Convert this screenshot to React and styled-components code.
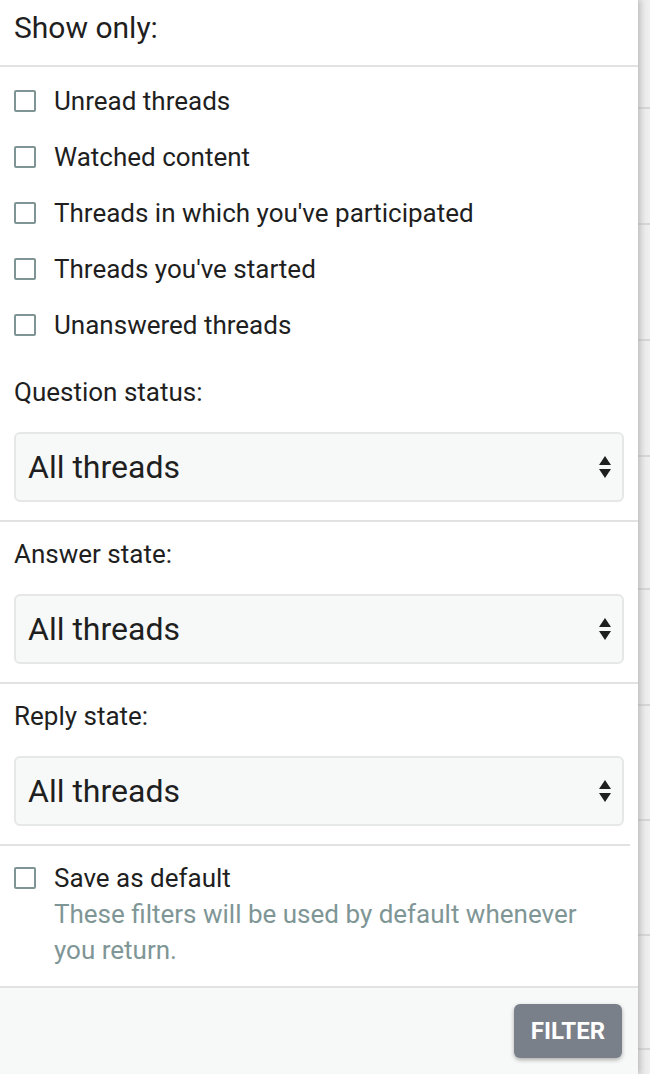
import React from 'react';
import styled, { createGlobalStyle } from 'styled-components';

const GlobalStyle = createGlobalStyle`
  html, body {
    margin: 0;
    padding: 0;
    background: #efefef;
    font-family: Roboto, "Liberation Sans", Arial, sans-serif;
    color: #1f1f1f;
  }
`;

const Page = styled.div`
  display: flex;
  width: 650px;
  height: 1074px;
  overflow: hidden;
`;

const Panel = styled.div`
  width: 638px;
  flex-shrink: 0;
  background: #fff;
  box-shadow: 2px 0 6px rgba(0, 0, 0, 0.18);
  position: relative;
  z-index: 1;
  display: flex;
  flex-direction: column;
`;

const Backdrop = styled.div`
  flex: 1;
  display: flex;
  flex-direction: column;
  background: linear-gradient(90deg, #e4e4e4 0%, #f0f0f0 100%);
`;

const BackdropRow = styled.div`
  flex-shrink: 0;
  border-bottom: 2px solid #d6d6d6;
  box-sizing: border-box;
`;

const Header = styled.div`
  height: 67px;
  box-sizing: border-box;
  padding: 11px 14px 0;
  font-size: 30px;
  line-height: 34px;
  border-bottom: 2px solid #e2e2e2;
`;

const Options = styled.div`
  padding: 6px 0 7px;
`;

const CheckRow = styled.label`
  display: flex;
  align-items: center;
  gap: 18px;
  height: 56px;
  padding: 0 14px;
  font-size: 26px;
`;

const Box = styled.span`
  width: 22px;
  height: 22px;
  box-sizing: border-box;
  border: 2px solid #7f9595;
  border-radius: 2px;
  flex-shrink: 0;
`;

const Section = styled.div`
  padding: 18px 14px;
  border-bottom: ${p => (p.$divider ? '2px solid #e2e2e2' : 'none')};
`;

const FieldLabel = styled.div`
  font-size: 26px;
  line-height: 28px;
  margin-bottom: 26px;
`;

const Select = styled.div`
  height: 70px;
  box-sizing: border-box;
  background: #f7f8f8;
  border: 2px solid #e6e7e7;
  border-radius: 6px;
  display: flex;
  align-items: center;
  justify-content: space-between;
  padding: 0 10px 0 12px;
  font-size: 32px;
`;

const SaveBlock = styled.div`
  margin-right: 8px;
  padding: 14px 6px 18px 14px;
  border-top: 2px solid #e2e2e2;
`;

const SaveRow = styled.div`
  display: flex;
  gap: 18px;
  font-size: 26px;
  line-height: 36px;
  & > span:first-child {
    margin-top: 7px;
  }
`;

const Help = styled.div`
  color: #7f9696;
`;

const Footer = styled.div`
  flex: 1;
  border-top: 2px solid #e2e2e2;
  background: #f7f8f8;
  display: flex;
  justify-content: flex-end;
  align-items: flex-start;
  padding: 16px 16px 0;
`;

const Button = styled.button`
  height: 54px;
  width: 108px;
  border: none;
  border-radius: 6px;
  background: #7a808a;
  color: #fff;
  font-family: Roboto, "Liberation Sans", Arial, sans-serif;
  font-weight: 700;
  font-size: 24px;
  text-transform: uppercase;
  box-shadow: 0 2px 4px rgba(0, 0, 0, 0.3);
`;

const SortIcon = () => (
  <svg width="14" height="24" viewBox="0 0 14 24">
    <path d="M7 1 L13 10 L1 10 Z" fill="#1f1f1f" />
    <path d="M1 14 L13 14 L7 23 Z" fill="#1f1f1f" />
  </svg>
);

const options = [
  'Unread threads',
  'Watched content',
  "Threads in which you've participated",
  "Threads you've started",
  'Unanswered threads',
];

const fields = ['Question status:', 'Answer state:', 'Reply state:'];

const backdropRows = [109, 116, 116, 116, 133, 116, 115, 115, 114];

export default function App() {
  return (
    <>
      <GlobalStyle />
      <Page>
        <Panel>
          <Header>Show only:</Header>
          <Options>
            {options.map(o => (
              <CheckRow key={o}>
                <Box />
                {o}
              </CheckRow>
            ))}
          </Options>
          {fields.map((f, i) => (
            <Section key={f} $divider={i < fields.length - 1}>
              <FieldLabel>{f}</FieldLabel>
              <Select>
                All threads
                <SortIcon />
              </Select>
            </Section>
          ))}
          <SaveBlock>
            <SaveRow>
              <Box />
              <div>
                Save as default
                <Help>These filters will be used by default whenever you return.</Help>
              </div>
            </SaveRow>
          </SaveBlock>
          <Footer>
            <Button>Filter</Button>
          </Footer>
        </Panel>
        <Backdrop>
          {backdropRows.map((h, i) => (
            <BackdropRow key={i} style={{ height: h }} />
          ))}
        </Backdrop>
      </Page>
    </>
  );
}
